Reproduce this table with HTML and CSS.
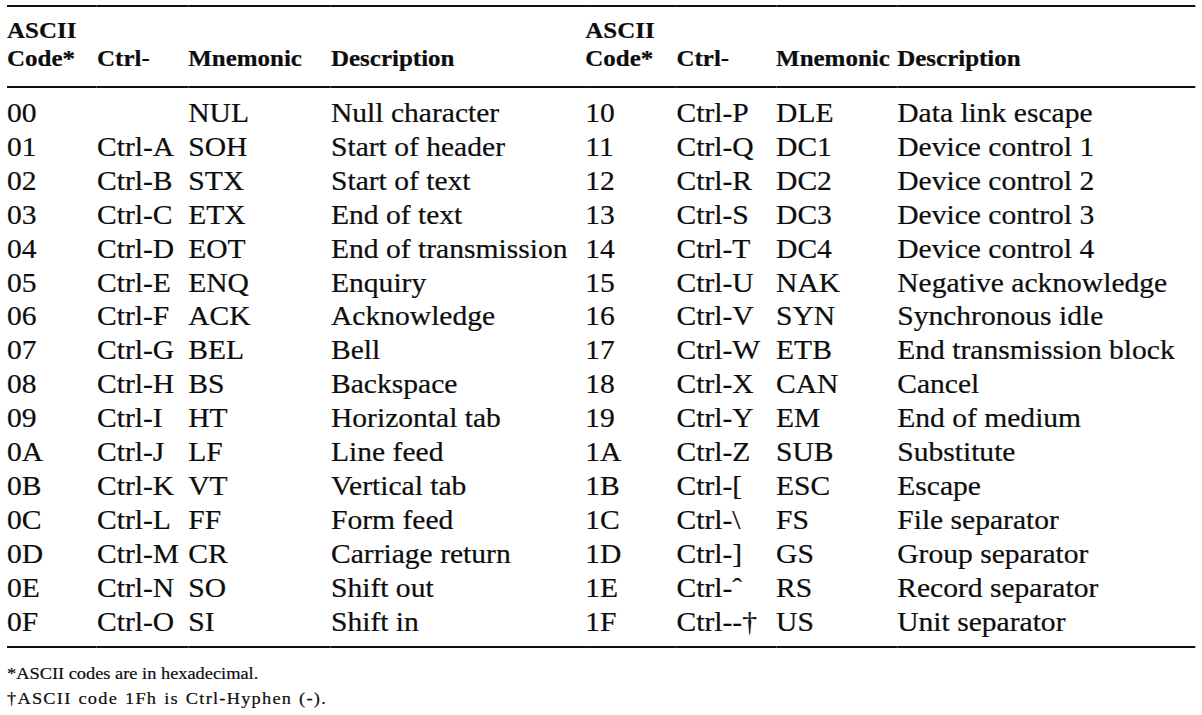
FILE: index.html
```html
<!DOCTYPE html>
<html lang="en">
<head>
<meta charset="utf-8">
<title>ASCII control codes</title>
<link rel="stylesheet" href="styles.css">
</head>
<body>
<div class="sheet">
  <table class="codes">
    <colgroup>
      <col class="c-code"><col class="c-ctrl"><col class="c-mnem"><col class="c-desc">
      <col class="c-code2"><col class="c-ctrl2"><col class="c-mnem2"><col class="c-desc2">
    </colgroup>
    <thead>
      <tr>
        <th>ASCII<br>Code*</th><th>Ctrl-</th><th>Mnemonic</th><th>Description</th>
        <th>ASCII<br>Code*</th><th>Ctrl-</th><th>Mnemonic</th><th>Description</th>
      </tr>
    </thead>
    <tbody>
      <tr><td>00</td><td></td><td>NUL</td><td>Null character</td><td>10</td><td>Ctrl-P</td><td>DLE</td><td>Data link escape</td></tr>
      <tr><td>01</td><td>Ctrl-A</td><td>SOH</td><td>Start of header</td><td>11</td><td>Ctrl-Q</td><td>DC1</td><td>Device control 1</td></tr>
      <tr><td>02</td><td>Ctrl-B</td><td>STX</td><td>Start of text</td><td>12</td><td>Ctrl-R</td><td>DC2</td><td>Device control 2</td></tr>
      <tr><td>03</td><td>Ctrl-C</td><td>ETX</td><td>End of text</td><td>13</td><td>Ctrl-S</td><td>DC3</td><td>Device control 3</td></tr>
      <tr><td>04</td><td>Ctrl-D</td><td>EOT</td><td>End of transmission</td><td>14</td><td>Ctrl-T</td><td>DC4</td><td>Device control 4</td></tr>
      <tr><td>05</td><td>Ctrl-E</td><td>ENQ</td><td>Enquiry</td><td>15</td><td>Ctrl-U</td><td>NAK</td><td>Negative acknowledge</td></tr>
      <tr><td>06</td><td>Ctrl-F</td><td>ACK</td><td>Acknowledge</td><td>16</td><td>Ctrl-V</td><td>SYN</td><td>Synchronous idle</td></tr>
      <tr><td>07</td><td>Ctrl-G</td><td>BEL</td><td>Bell</td><td>17</td><td>Ctrl-W</td><td>ETB</td><td>End transmission block</td></tr>
      <tr><td>08</td><td>Ctrl-H</td><td>BS</td><td>Backspace</td><td>18</td><td>Ctrl-X</td><td>CAN</td><td>Cancel</td></tr>
      <tr><td>09</td><td>Ctrl-I</td><td>HT</td><td>Horizontal tab</td><td>19</td><td>Ctrl-Y</td><td>EM</td><td>End of medium</td></tr>
      <tr><td>0A</td><td>Ctrl-J</td><td>LF</td><td>Line feed</td><td>1A</td><td>Ctrl-Z</td><td>SUB</td><td>Substitute</td></tr>
      <tr><td>0B</td><td>Ctrl-K</td><td>VT</td><td>Vertical tab</td><td>1B</td><td>Ctrl-[</td><td>ESC</td><td>Escape</td></tr>
      <tr><td>0C</td><td>Ctrl-L</td><td>FF</td><td>Form feed</td><td>1C</td><td>Ctrl-\</td><td>FS</td><td>File separator</td></tr>
      <tr><td>0D</td><td>Ctrl-M</td><td>CR</td><td>Carriage return</td><td>1D</td><td>Ctrl-]</td><td>GS</td><td>Group separator</td></tr>
      <tr><td>0E</td><td>Ctrl-N</td><td>SO</td><td>Shift out</td><td>1E</td><td>Ctrl-ˆ</td><td>RS</td><td>Record separator</td></tr>
      <tr><td>0F</td><td>Ctrl-O</td><td>SI</td><td>Shift in</td><td>1F</td><td>Ctrl--†</td><td>US</td><td>Unit separator</td></tr>
    </tbody>
  </table>
  <div class="notes">
    <p class="note">*ASCII codes are in hexadecimal.</p>
    <p class="note note-wide">†ASCII code 1Fh is Ctrl-Hyphen (-).</p>
  </div>
</div>
</body>
</html>
```
FILE: styles.css
```css
html, body {
  margin: 0;
  padding: 0;
  background: #ffffff;
}

body {
  color: #0d0d0d;
  font-family: "Liberation Serif", "Times New Roman", serif;
  width: 1202px;
  height: 715px;
  overflow: hidden;
}

.sheet {
  width: 1061px;
  margin-left: 7px;
  padding-top: 5px;
  transform: scaleX(1.12);
  transform-origin: 0 0;
  -webkit-text-stroke: 0.2px #0d0d0d;
}

.codes {
  width: 1061px;
  table-layout: fixed;
  border-collapse: collapse;
  border-top: 2px solid #111111;
  border-bottom: 2px solid #111111;
}

.c-code { width: 80.4px; }
.c-ctrl { width: 81.4px; }
.c-mnem { width: 127.5px; }
.c-desc { width: 227.1px; }
.c-code2 { width: 81.4px; }
.c-ctrl2 { width: 88.9px; }
.c-mnem2 { width: 108.2px; }
.c-desc2 { width: 266.1px; }

.codes th {
  font-weight: bold;
  font-size: 22.3px;
  line-height: 28px;
  text-align: left;
  vertical-align: bottom;
  padding: 10px 0 13px 0;
  border-bottom: 2px solid #111111;
  white-space: nowrap;
}

.codes td {
  font-size: 26.4px;
  line-height: 33.9px;
  padding: 0;
  white-space: nowrap;
  vertical-align: top;
}

.codes tbody tr:first-child td {
  padding-top: 9px;
}

.codes tbody tr:last-child td {
  padding-bottom: 6.6px;
}

.notes {
  padding-top: 13px;
}

.note {
  margin: 0;
  font-size: 16.4px;
  line-height: 25px;
}

.note-wide {
  letter-spacing: 1.1px;
  word-spacing: 1px;
}
```
